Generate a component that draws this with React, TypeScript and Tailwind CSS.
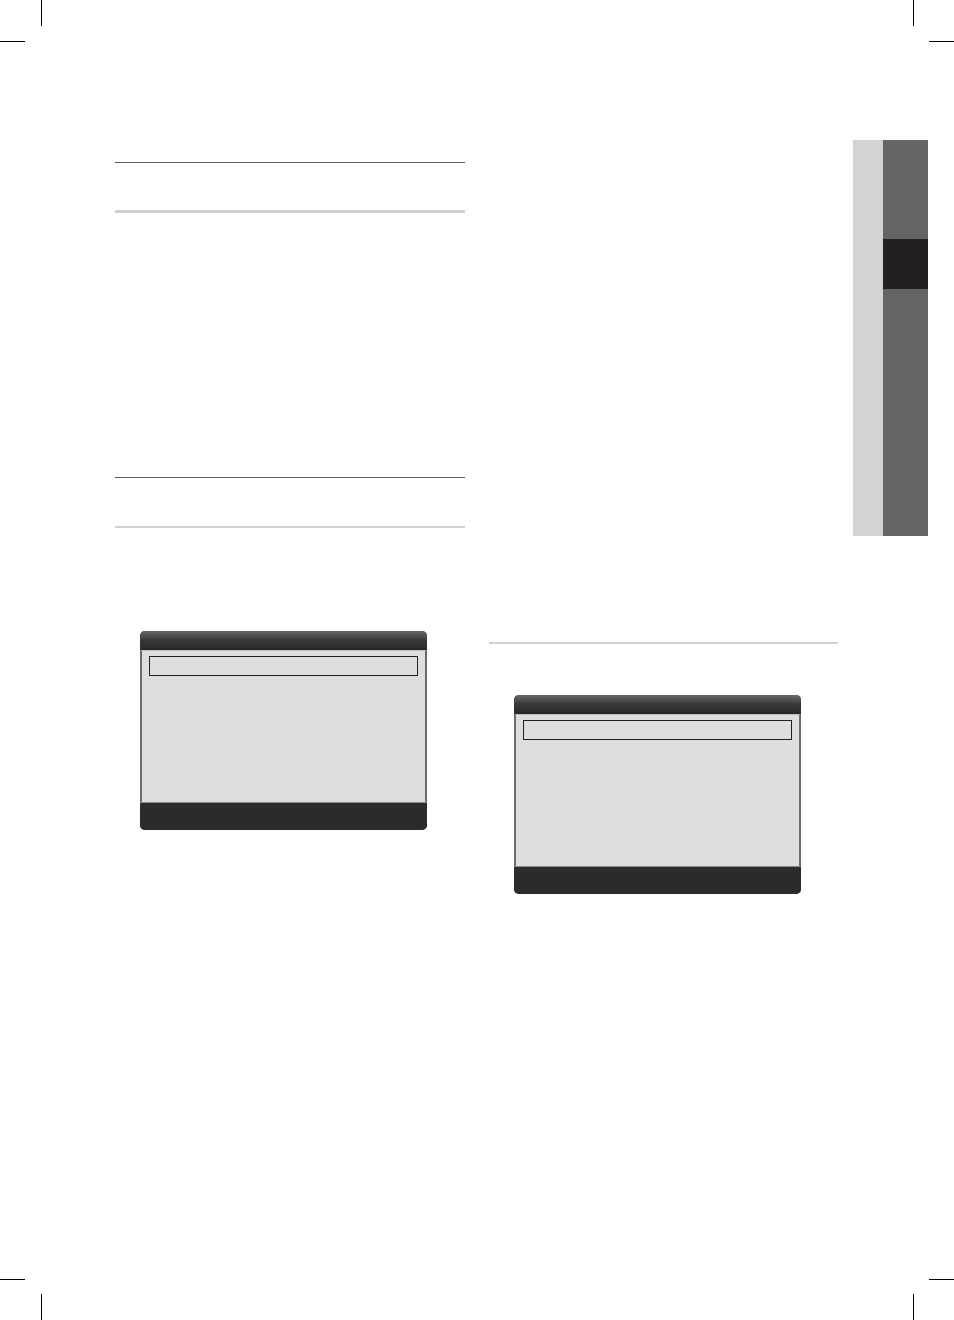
import React from "react";

function MenuBox() {
  return (
    <div className="ml-[25px] flex h-[199px] w-[287px] flex-col overflow-hidden rounded-[5px] bg-[#2d2a2b]">
      <div className="h-[19px] bg-gradient-to-b from-[#6a6869] via-[#3a3738] to-[#2a2728]" />
      <div className="flex flex-1 flex-col border-x-2 border-[#6b6b6b] border-t border-t-[#bdbdbd] bg-[#dedede] px-[7px] pt-[5px]">
        <div className="h-[20px] w-full border border-[#231f20]" />
      </div>
      <div className="h-[1px] bg-[#8a8a8a]" />
      <div className="h-[27px] bg-[#2d2a2b]" />
    </div>
  );
}

function CropH() {
  return <div className="h-[1px] w-[25px] bg-black" />;
}
function CropV() {
  return <div className="h-[26px] w-[1px] bg-black" />;
}

export default function App() {
  return (
    <div className="relative h-[1320px] w-[954px] overflow-hidden bg-white" style={{ fontFamily: '"Liberation Sans", Arial, sans-serif' }}>
      {/* crop marks */}
      <div className="absolute left-[41px] top-0"><CropV /></div>
      <div className="absolute left-0 top-[41px]"><CropH /></div>
      <div className="absolute left-[913px] top-0"><CropV /></div>
      <div className="absolute left-[929px] top-[41px]"><CropH /></div>
      <div className="absolute left-0 top-[1279px]"><CropH /></div>
      <div className="absolute left-[41px] top-[1294px]"><CropV /></div>
      <div className="absolute left-[929px] top-[1279px]"><CropH /></div>
      <div className="absolute left-[913px] top-[1294px]"><CropV /></div>

      <div className="flex pl-[115px]">
        {/* left column */}
        <div className="flex w-[350px] flex-col pt-[162px]">
          <div className="h-[1px] bg-[#5f5f5f]" />
          <div className="h-[47px]" />
          <div className="h-[3px] bg-[#d0d0d0]" />
          <div className="h-[264px]" />
          <div className="h-[1px] bg-[#5f5f5f]" />
          <div className="h-[48px]" />
          <div className="h-[2px] bg-[#d0d0d0]" />
          <div className="h-[103px]" />
          <MenuBox />
        </div>

        {/* right column */}
        <div className="ml-[24px] flex w-[349px] flex-col pt-[642px]">
          <div className="h-[2px] bg-[#d0d0d0]" />
          <div className="h-[51px]" />
          <MenuBox />
        </div>

        {/* side tab */}
        <div className="ml-[15px] mt-[140px] flex h-[396px] w-[75px]">
          <div className="w-[30px] bg-[#d3d3d3]" />
          <div className="flex w-[45px] flex-col bg-[#666565]">
            <div className="h-[99px]" />
            <div className="h-[50px] bg-[#231f20]" />
          </div>
        </div>
      </div>
    </div>
  );
}
